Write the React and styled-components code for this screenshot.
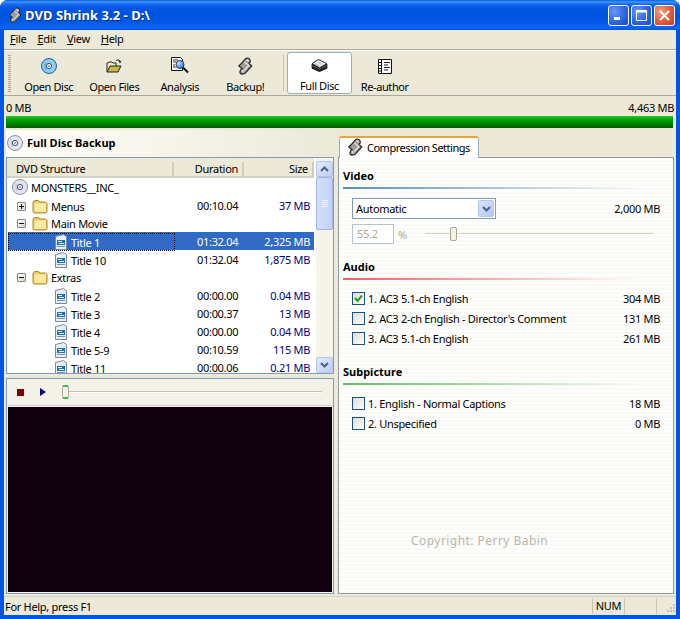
import styled, { createGlobalStyle } from "styled-components";

const Global = createGlobalStyle`
  html, body { margin: 0; padding: 0; background: #fff; }
  body { font-family: "Noto Sans", "Liberation Sans", sans-serif; font-size: 11px; letter-spacing: -0.3px; color: #000; }
  * { box-sizing: border-box; }
`;

const Win = styled.div`
  width: 680px;
  height: 619px;
  display: flex;
  flex-direction: column;
  overflow: hidden;
  border-radius: 8px 8px 0 0;
  background: #0055e5;
`;
const TitleBar = styled.div`
  height: 30px;
  flex: none;
  display: flex;
  align-items: center;
  padding: 0 5px 0 7px;
  background: linear-gradient(180deg, #0a5fe0 0, #3f95f8 2px, #1a6cf0 4px, #0157e4 8px, #0052dc 14px, #0058e8 22px, #0a66f6 27px, #0a5ee8 29px, #0048c8 30px);
`;
const TitleText = styled.span`
  font: bold 13px "Noto Sans", sans-serif;
  letter-spacing: 0.05px;
  color: #fff;
  margin-left: 2px;
  text-shadow: 1px 1px 0 #0f2f8f;
  flex: 1;
`;
const CapBtn = styled.div`
  width: 21px;
  height: 21px;
  margin-left: 2px;
  border: 1px solid #fff;
  border-radius: 3px;
  display: flex;
  align-items: center;
  justify-content: center;
  background: ${(p) =>
    p.$close
      ? "radial-gradient(circle at 30% 30%, #f0a088 0, #e0603c 50%, #c63a18 100%)"
      : "radial-gradient(circle at 30% 30%, #6a98f4 0, #2a62e0 60%, #1c48c8 100%)"};
`;
const Body = styled.div`
  flex: 1;
  min-height: 0;
  margin: 0 4px 4px;
  background: #ece9d8;
  display: flex;
  flex-direction: column;
`;
const MenuBar = styled.div`
  height: 20px;
  flex: none;
  display: flex;
  align-items: center;
  padding: 0 0 2px 6px;
  gap: 11px;
  border-bottom: 1px solid #aca899;
  span u { text-decoration: underline; }
`;
const ToolBar = styled.div`
  height: 46px;
  flex: none;
  display: flex;
  align-items: stretch;
  padding: 1px 0 1px 4px;
  border-top: 1px solid #fff;
  border-bottom: 1px solid #aca899;
`;
const Grip = styled.div`
  width: 3px;
  margin: 3px 5px 1px 0;
  background: repeating-linear-gradient(180deg, #a8a595 0 1px, #ece9d8 1px 2px);
`;
const ToolBtn = styled.div`
  width: ${(p) => (p.$active ? "65px" : "65.5px")};
  display: flex;
  flex-direction: column;
  align-items: center;
  padding-top: ${(p) => (p.$active ? "3px" : "4px")};
  gap: 4px;
  line-height: 14px;
  letter-spacing: -0.4px;
  ${(p) => p.$active && "background:#fff;border:1px solid #9aaebf;border-radius:3px;"}
`;
const ToolIcon = styled.div`
  height: 20px;
  display: flex;
  align-items: center;
  justify-content: center;
`;
const ToolSep = styled.div`
  width: 1px;
  margin: 3px 3px 3px 5px;
  background: #c4c1b0;
`;
const ProgressBox = styled.div`
  flex: none;
  height: 34px;
  padding: 0 2px;
  display: flex;
  flex-direction: column;
`;
const ProgressLabels = styled.div`
  height: 20px;
  padding-top: 2px;
  display: flex;
  justify-content: space-between;
  align-items: center;
`;
const ProgressBar = styled.div`
  height: 12px;
  margin-right: 1px;
  background: linear-gradient(180deg, #24c824 0, #0ca80c 3px, #008a00 7px, #005c00 12px);
`;
const Main = styled.div`
  flex: 1;
  min-height: 0;
  display: flex;
  padding: 0 2px 2px;
  gap: 4px;
`;
const LeftCol = styled.div`
  width: 328px;
  flex: none;
  display: flex;
  flex-direction: column;
`;
const PaneTitle = styled.div`
  height: 27px;
  flex: none;
  display: flex;
  align-items: center;
  gap: 4px;
  padding: 0 0 2px 1px;
  font-weight: 700;
  letter-spacing: 0;
  background: linear-gradient(90deg, #fffff8 0, #f8f7ee 40%, #ece9d8 100%);
`;
const ListBox = styled.div`
  height: 217px;
  flex: none;
  display: flex;
  overflow: hidden;
  background: #fff;
  border: 1px solid #7f9db9;
`;
const ListMain = styled.div`
  flex: 1;
  min-width: 0;
  overflow: hidden;
`;
const Header = styled.div`
  height: 20px;
  padding-top: 3px;
  display: grid;
  grid-template-columns: 167px 70px 70px;
  align-items: center;
  background: #ece9d8;
  border-bottom: 2px solid #d6d2c2;
`;
const HeadCell = styled.div`
  height: 14px;
  line-height: 14px;
  padding: 0 4px 0 9px;
  text-align: ${(p) => (p.$right ? "right" : "left")};
  border-right: 2px solid #d0ccbb;
`;
const RootRow = styled.div`
  height: 18px;
  display: flex;
  align-items: center;
  gap: 3px;
  padding-left: 5px;
  white-space: nowrap;
`;
const Row = styled.div`
  height: 18px;
  display: grid;
  grid-template-columns: 167px 70px 70px;
  align-items: center;
  line-height: 20px;
  white-space: nowrap;
  width: 307px;
  margin-left: 1px;
  ${(p) => p.$selected && "background:#316ac5;color:#fff;"}
`;
const NameCell = styled.div`
  height: 18px;
  display: flex;
  align-items: center;
  padding-left: ${(p) => p.$indent}px;
  gap: 3px;
  ${(p) => p.$selected && "outline:1px dotted #000;outline-offset:-1px;"}
`;
const NameText = styled.span`
  padding-top: 1px;
`;
const Expander = styled.div`
  width: 9px;
  height: 9px;
  margin-right: 3px;
  border: 1px solid #7a8a99;
  border-radius: 1px;
  background: linear-gradient(135deg, #fff, #d8d4c8);
  display: flex;
  align-items: center;
  justify-content: center;
`;
const DurCell = styled.div`
  padding-left: 22px;
`;
const SizeCell = styled.div`
  text-align: right;
  padding-right: 5px;
  color: ${(p) => (p.$selected ? "#fff" : "#00007f")};
`;
const ScrollBar = styled.div`
  width: 17px;
  flex: none;
  margin-left: 2px;
  display: flex;
  flex-direction: column;
  background: #f5f4ea;
  padding-top: 3px;
`;
const ScrollBtn = styled.div`
  height: 16px;
  flex: none;
  border: 1px solid #b4c4e8;
  border-radius: 2px;
  background: linear-gradient(135deg, #e4ecfd, #bccdf5);
  display: flex;
  align-items: center;
  justify-content: center;
`;
const ScrollThumb = styled.div`
  height: 53px;
  flex: none;
  border: 1px solid #9fb4e4;
  border-radius: 2px;
  background: linear-gradient(90deg, #d2dffb, #c2d2f8);
  display: flex;
  flex-direction: column;
  align-items: center;
  justify-content: center;
  gap: 1px;
  i { display: block; width: 6px; height: 1px; background: #eef3fe; }
`;
const ScrollFill = styled.div`
  flex: 1;
`;
const Player = styled.div`
  flex: 1;
  min-height: 0;
  margin-top: 4px;
  border: 1px solid #7f9db9;
  background: #f4f2e8;
  display: flex;
  flex-direction: column;
`;
const PlayerBar = styled.div`
  height: 27px;
  flex: none;
  display: flex;
  align-items: center;
  padding: 0 0 0 10px;
  border-bottom: 1px solid #d8d5c6;
`;
const StopIcon = styled.div`
  width: 7px;
  height: 7px;
  background: #800000;
`;
const PlayIcon = styled.div`
  margin-left: 16px;
  width: 0;
  height: 0;
  border-left: 6px solid #000080;
  border-top: 4px solid transparent;
  border-bottom: 4px solid transparent;
`;
const Slider = styled.div`
  position: relative;
  height: 2px;
  background: ${(p) => (p.$disabled ? "#d4d1c0" : "#c4c2b2")};
  border-bottom: 1px solid #fff;
  margin-left: ${(p) => p.$ml}px;
  width: ${(p) => p.$w}px;
`;
const SliderThumb = styled.div`
  position: absolute;
  top: -6px;
  left: ${(p) => p.$left}px;
  width: 7px;
  height: 14px;
  border-radius: 2px;
  background: #f4f3ea;
  border: 1px solid ${(p) => (p.$green ? "#aab0a0" : "#a8a690")};
  ${(p) => p.$green && "border-top:2px solid #3ec03e;border-bottom:2px solid #3ec03e;"}
`;
const Screen = styled.div`
  flex: 1;
  margin: 1px;
  background: #12000f;
`;
const RightCol = styled.div`
  flex: 1;
  min-width: 0;
  display: flex;
  flex-direction: column;
  padding-top: 6px;
`;
const TabStrip = styled.div`
  display: flex;
  flex: none;
  position: relative;
  z-index: 1;
  margin-bottom: -1px;
`;
const Tab = styled.div`
  width: 140px;
  height: 22px;
  display: flex;
  align-items: center;
  gap: 3px;
  margin-left: 1px;
  padding: 0 0 2px 6px;
  white-space: nowrap;
  letter-spacing: -0.5px;
  background: #fff;
  border: 1px solid #9aaebf;
  border-bottom: none;
  border-top: 2px solid #e8a43a;
  border-radius: 3px 3px 0 0;
`;
const SettingsPanel = styled.div`
  flex: 1;
  min-height: 0;
  border: 1px solid #919b9c;
  padding: 10px 4px 0;
  background: repeating-linear-gradient(180deg, #fff 0 2px, #f9f9f6 2px 4px);
  display: flex;
  flex-direction: column;
`;
const SectionTitle = styled.div`
  font-weight: 700;
  letter-spacing: 0;
  line-height: 15px;
  margin-top: ${(p) => p.$mt || 0}px;
  margin-bottom: 4px;
`;
const Rule = styled.div`
  height: 2px;
  width: 300px;
  background: linear-gradient(90deg, ${(p) => p.$color}, transparent);
`;
const ComboRow = styled.div`
  display: flex;
  align-items: center;
  justify-content: space-between;
  padding: 9px 9px 0 9px;
`;
const Combo = styled.div`
  width: 144px;
  height: 21px;
  border: 1px solid #7f9db9;
  background: #fff;
  display: flex;
  align-items: center;
  padding: 1px 1px 1px 3px;
  justify-content: space-between;
`;
const ComboBtn = styled(ScrollBtn)`
  width: 16px;
  height: 17px;
  background: linear-gradient(135deg, #dce6fc, #b0c4f4);
`;
const PercentRow = styled.div`
  display: flex;
  align-items: center;
  padding: 5px 0 0 9px;
  color: #aca899;
`;
const PercentBox = styled.div`
  width: 42px;
  height: 20px;
  border: 1px solid #b4c4c8;
  padding-left: 4px;
  line-height: 18px;
  margin-right: 4px;
  background: #fff;
`;
const Group = styled.div`
  display: flex;
  flex-direction: column;
  gap: 3px;
  padding: 10px 9px 0 9px;
`;
const OptionRow = styled.div`
  height: 17px;
  display: flex;
  align-items: center;
  gap: 3px;
  span:last-child { margin-left: auto; }
`;
const Check = styled.div`
  width: 13px;
  height: 13px;
  border: 1px solid #1c5180;
  background: linear-gradient(135deg, #dcdcd7, #fff);
  display: flex;
  align-items: center;
  justify-content: center;
`;
const Copyright = styled.div`
  margin-top: auto;
  padding: 0 0 44px 68px;
  font-size: 12px;
  color: #b8b6a8;
  letter-spacing: 0.45px;
`;
const StatusBar = styled.div`
  height: 19px;
  flex: none;
  display: flex;
  align-items: center;
  padding: 0 0 0 1px;
  border-top: 1px solid #d6d3c4;
`;
const StatusText = styled.div`
  flex: 1;
`;
const StatusCell = styled.div`
  height: 16px;
  width: ${(p) => p.$w}px;
  line-height: 16px;
  text-align: center;
  border-left: 1px solid #c8c5b4;
`;
const SizeGrip = styled.div`
  width: 20px;
  height: 16px;
  border-left: 1px solid #c8c5b4;
  display: flex;
  justify-content: flex-end;
  align-items: flex-end;
`;

const Disc = ({ size = 16, grey }) => (
  <svg width={size} height={size} viewBox="0 0 16 16">
    <circle cx="8" cy="8" r="7.5" fill={grey ? "#e4e4f0" : "#8cd0f8"} stroke={grey ? "#8890a4" : "#2a5a8a"} />
    <path d="M3 3.500 L8 8 L4 13 Z" fill={grey ? "#c8c8e4" : "#58b0f0"} />
    <circle cx="8" cy="8" r="2.600" fill="#fff" stroke="#405068" />
    <circle cx="8" cy="8" r="0.800" fill="#405060" />
  </svg>
);
const OpenFolder = () => (
  <svg width="16" height="16" viewBox="0 0 16 16">
    <path d="M1 14V5h1l1-1h3l1 1h3v3" fill="#f4eebc" stroke="#222" />
    <path d="M1 14l3-6h11l-3 6z" fill="#c8b848" stroke="#222" />
    <path d="M10 3c1-1.500 3-1.500 4 0" fill="none" stroke="#222" />
    <path d="M12.500 3h3L14 5.500z" fill="#222" />
  </svg>
);
const Magnifier = () => (
  <svg width="20" height="20" viewBox="0 0 20 20">
    <defs>
      <radialGradient id="lens" cx="35%" cy="35%" r="70%">
        <stop offset="0" stopColor="#c8e8ff" />
        <stop offset="1" stopColor="#2070e0" />
      </radialGradient>
    </defs>
    <path d="M1.500 1.500h9l2 2v11h-11z" fill="#fff" stroke="#111" />
    <path d="M3 4h5M3 6h3M3 9h2M3 11h3" stroke="#333" />
    <circle cx="10" cy="8.500" r="4" fill="url(#lens)" stroke="#345" />
    <path d="M13 11.500l5 5" stroke="#111" strokeWidth="2" />
  </svg>
);
const Scroll = ({ size = 18 }) => (
  <svg width={size} height={size} viewBox="0 0 16 16">
    <path d="M8.500 1.500c1-1 3.500-.5 4 1S12.500 5 11.500 5.500l2.500 2.500-5.500 6c-1 1.500-4 1.500-4.800.3S4 11 5.500 10.500L2.500 8l4-4c.5-.8 1-1.800 2-2.500z" fill="#9c9c9c" stroke="#222" />
    <path d="M7.500 4.500l4 3L7 12" fill="none" stroke="#e8e8e8" />
    <path d="M9.500 3c.8-.5 1.500 0 1.300 1" fill="none" stroke="#fff" />
    <path d="M5 12.500c.6-.5 1.400 0 1 1" fill="none" stroke="#fff" />
  </svg>
);
const Stack = () => (
  <svg width="17" height="13" viewBox="0 0 18 14">
    <path d="M1 8l8 4.500 8-4.500v2l-8 3.500-8-3.500z" fill="#333" stroke="#111" />
    <path d="M1 5.500l8 4.500 8-4.500v2.500l-8 4-8-4z" fill="#666" stroke="#111" />
    <path d="M1 5l7-4.500 9 4.500-8 4.500z" fill="#f0f0f0" stroke="#111" />
    <path d="M4 5l5 2.500M7 3.500l5 2.500" stroke="#aaa" />
  </svg>
);
const FilmDoc = () => (
  <svg width="16" height="17" viewBox="0 0 16 17">
    <path d="M1.500 1.500h13v14h-13z" fill="#fff" stroke="#111" />
    <path d="M4.500 1.500v14M1.500 4.500h3M1.500 7.500h3M1.500 10.500h3M1.500 13h3" stroke="#111" />
    <path d="M7 4.500h6M7 7h4M7 9.500h6M7 12h4" stroke="#222" />
  </svg>
);
const Folder = () => (
  <svg width="16" height="15" viewBox="0 0 16 15">
    <path d="M1 12.500V3l1.500-1.500h4l1.500 1.500h5.500l1.500 1.500v8l-1 1.500H2z" fill="#f0c850" stroke="#a88a30" />
    <path d="M2.500 5.500h11.500v7.500H2.500z" fill="#fbe9a4" />
    <path d="M2.500 5h11.500" stroke="#fffbe0" />
  </svg>
);
const TitleIcon = () => (
  <svg width="14" height="16" viewBox="0 0 14 16">
    <path d="M1.500 2.500l8-2 3 2v13h-11z" fill="#e8eef4" stroke="#7888a0" />
    <path d="M3 6h8v5H3z" fill="#2070b8" />
    <path d="M4 7.500h4M5 9.500h5" stroke="#e8f4ff" />
    <path d="M3 12.500h8" stroke="#8090a8" />
  </svg>
);
const Chevron = ({ up }) => (
  <svg width="9" height="6" viewBox="0 0 9 6">
    <path d={up ? "M1 5l3.500-3.500L8 5" : "M1 1l3.500 3.500L8 1"} fill="none" stroke="#4d6185" strokeWidth="2" />
  </svg>
);
const Sign = ({ plus }) => (
  <svg width="7" height="7" viewBox="0 0 7 7">
    <path d={plus ? "M1 3.500h5M3.500 1v5" : "M1 3.500h5"} stroke="#111" fill="none" />
  </svg>
);

const rows = [
  { name: "Menus", kind: "folder", exp: "+", dur: "00:10.04", size: "37 MB" },
  { name: "Main Movie", kind: "folder", exp: "-" },
  { name: "Title 1", dur: "01:32.04", size: "2,325 MB", selected: true },
  { name: "Title 10", dur: "01:32.04", size: "1,875 MB" },
  { name: "Extras", kind: "folder", exp: "-" },
  { name: "Title 2", dur: "00:00.00", size: "0.04 MB" },
  { name: "Title 3", dur: "00:00.37", size: "13 MB" },
  { name: "Title 4", dur: "00:00.00", size: "0.04 MB" },
  { name: "Title 5-9", dur: "00:10.59", size: "115 MB" },
  { name: "Title 11", dur: "00:00.06", size: "0.21 MB" },
];

const tools = [
  { label: "Open Disc", icon: <Disc /> },
  { label: "Open Files", icon: <OpenFolder /> },
  { label: "Analysis", icon: <Magnifier /> },
  { label: "Backup!", icon: <Scroll /> },
];

export default function App() {
  return (
    <>
      <Global />
      <Win>
        <TitleBar>
          <Scroll size={16} />
          <TitleText>DVD Shrink 3.2 - D:\</TitleText>
          <CapBtn>
            <svg width="11" height="11" viewBox="0 0 11 11"><path d="M1 7h6v3H1z" fill="#fff" /></svg>
          </CapBtn>
          <CapBtn>
            <svg width="13" height="13" viewBox="0 0 13 13"><path d="M1.500 1.500h10v10h-10z" fill="none" stroke="#fff" /><path d="M1 2.500h11" stroke="#fff" strokeWidth="2" /></svg>
          </CapBtn>
          <CapBtn $close>
            <svg width="13" height="13" viewBox="0 0 13 13"><path d="M2 2l9 9M11 2l-9 9" stroke="#fff" strokeWidth="2" /></svg>
          </CapBtn>
        </TitleBar>
        <Body>
          <MenuBar>
            <span><u>F</u>ile</span>
            <span><u>E</u>dit</span>
            <span><u>V</u>iew</span>
            <span><u>H</u>elp</span>
          </MenuBar>
          <ToolBar>
            <Grip />
            {tools.map((t) => (
              <ToolBtn key={t.label}>
                <ToolIcon>{t.icon}</ToolIcon>
                {t.label}
              </ToolBtn>
            ))}
            <ToolSep />
            <ToolBtn $active>
              <ToolIcon><Stack /></ToolIcon>
              Full Disc
            </ToolBtn>
            <ToolBtn>
              <ToolIcon><FilmDoc /></ToolIcon>
              Re-author
            </ToolBtn>
          </ToolBar>
          <ProgressBox>
            <ProgressLabels>
              <span>0 MB</span>
              <span>4,463 MB</span>
            </ProgressLabels>
            <ProgressBar />
          </ProgressBox>
          <Main>
            <LeftCol>
              <PaneTitle>
                <Disc grey />
                Full Disc Backup
              </PaneTitle>
              <ListBox>
                <ListMain>
                  <Header>
                    <HeadCell>DVD Structure</HeadCell>
                    <HeadCell $right>Duration</HeadCell>
                    <HeadCell $right>Size</HeadCell>
                  </Header>
                  <RootRow>
                    <Disc grey />
                    MONSTERS__INC_
                  </RootRow>
                  {rows.map((r) => (
                    <Row key={r.name} $selected={r.selected}>
                      <NameCell $indent={r.kind ? 9 : 46} $selected={r.selected}>
                        {r.exp && <Expander><Sign plus={r.exp === "+"} /></Expander>}
                        {r.kind ? <Folder /> : <TitleIcon />}
                        <NameText>{r.name}</NameText>
                      </NameCell>
                      <DurCell>{r.dur}</DurCell>
                      <SizeCell $selected={r.selected}>{r.size}</SizeCell>
                    </Row>
                  ))}
                </ListMain>
                <ScrollBar>
                  <ScrollBtn><Chevron up /></ScrollBtn>
                  <ScrollThumb><i /><i /><i /><i /></ScrollThumb>
                  <ScrollFill />
                  <ScrollBtn><Chevron /></ScrollBtn>
                </ScrollBar>
              </ListBox>
              <Player>
                <PlayerBar>
                  <StopIcon />
                  <PlayIcon />
                  <Slider $ml={16} $w={260}>
                    <SliderThumb $left={0} $green />
                  </Slider>
                </PlayerBar>
                <Screen />
              </Player>
            </LeftCol>
            <RightCol>
              <TabStrip>
                <Tab>
                  <Scroll />
                  Compression Settings
                </Tab>
              </TabStrip>
              <SettingsPanel>
                <SectionTitle>Video</SectionTitle>
                <Rule $color="#5a8fb8" />
                <ComboRow>
                  <Combo>
                    Automatic
                    <ComboBtn><Chevron /></ComboBtn>
                  </Combo>
                  <span>2,000 MB</span>
                </ComboRow>
                <PercentRow>
                  <PercentBox>55.2</PercentBox>
                  %
                  <Slider $ml={18} $w={228} $disabled>
                    <SliderThumb $left={25} />
                  </Slider>
                </PercentRow>
                <SectionTitle $mt={15}>Audio</SectionTitle>
                <Rule $color="#f06060" />
                <Group>
                  <OptionRow>
                    <Check>
                      <svg width="9" height="9" viewBox="0 0 9 9"><path d="M1 4l2.500 3L8 1.500" fill="none" stroke="#21a121" strokeWidth="2" /></svg>
                    </Check>
                    <span>1. AC3 5.1-ch English</span>
                    <span>304 MB</span>
                  </OptionRow>
                  <OptionRow>
                    <Check />
                    <span>2. AC3 2-ch English - Director's Comment</span>
                    <span>131 MB</span>
                  </OptionRow>
                  <OptionRow>
                    <Check />
                    <span>3. AC3 5.1-ch English</span>
                    <span>261 MB</span>
                  </OptionRow>
                </Group>
                <SectionTitle $mt={17}>Subpicture</SectionTitle>
                <Rule $color="#60c060" />
                <Group>
                  <OptionRow>
                    <Check />
                    <span>1. English - Normal Captions</span>
                    <span>18 MB</span>
                  </OptionRow>
                  <OptionRow>
                    <Check />
                    <span>2. Unspecified</span>
                    <span>0 MB</span>
                  </OptionRow>
                </Group>
                <Copyright>Copyright: Perry Babin</Copyright>
              </SettingsPanel>
            </RightCol>
          </Main>
          <StatusBar>
            <StatusText>For Help, press F1</StatusText>
            <StatusCell $w={32}>NUM</StatusCell>
            <StatusCell $w={32} />
            <SizeGrip>
              <svg width="12" height="12" viewBox="0 0 12 12">
                <path d="M9 2h2v2H9zM6 5h2v2H6zM9 5h2v2H9zM3 8h2v2H3zM6 8h2v2H6zM9 8h2v2H9z" fill="#c4c1b0" />
              </svg>
            </SizeGrip>
          </StatusBar>
        </Body>
      </Win>
    </>
  );
}
